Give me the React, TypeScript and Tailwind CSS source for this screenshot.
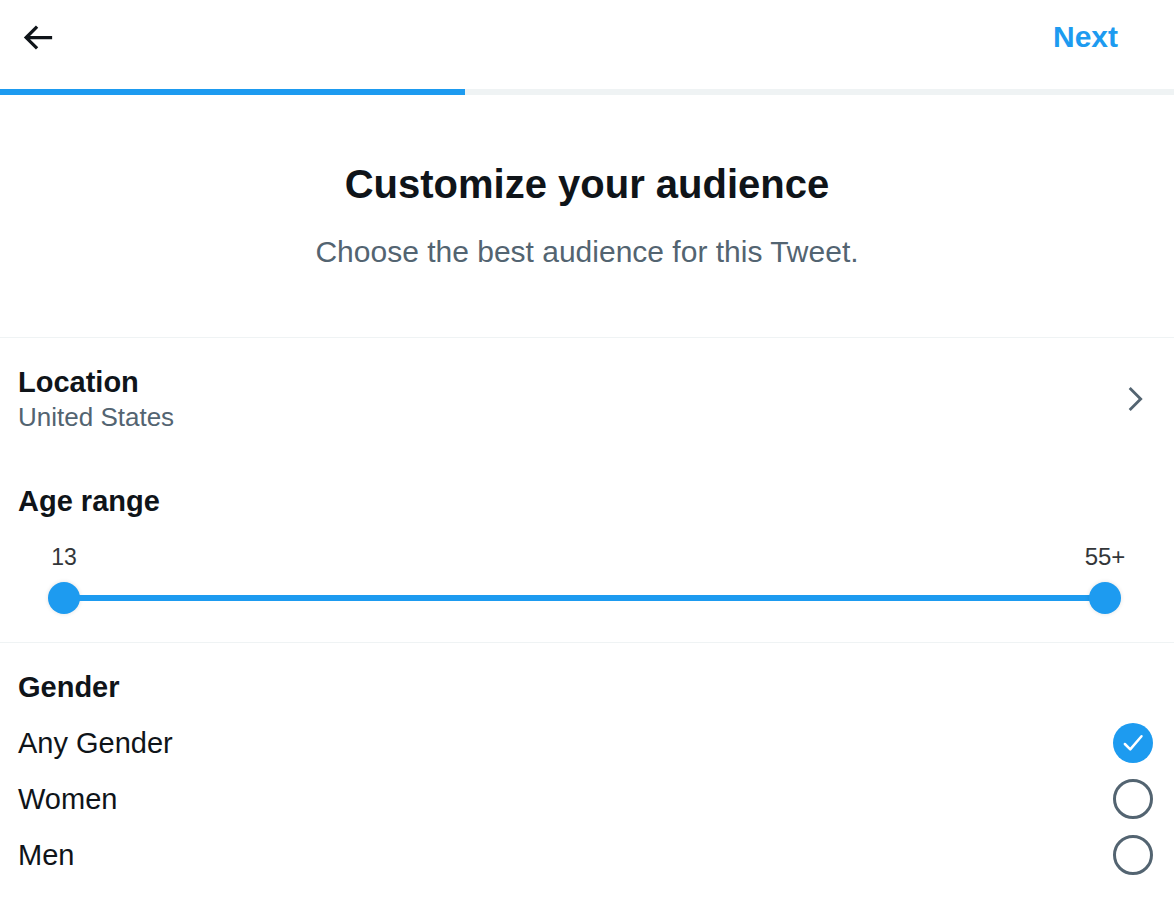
import React from "react";

const font = { fontFamily: '"Liberation Sans", Arial, sans-serif' };

function Check({ checked }: { checked: boolean }) {
  if (checked) {
    return (
      <div className="w-[40px] h-[40px] rounded-full bg-[#1d9bf0] flex items-center justify-center">
        <svg viewBox="0 0 24 24" className="w-[30px] h-[30px]" fill="none">
          <path d="M5.5 12.8l4.3 4.3L18.8 6.6" stroke="white" strokeWidth="2" strokeLinecap="round" strokeLinejoin="round" />
        </svg>
      </div>
    );
  }
  return <div className="w-[40px] h-[40px] rounded-full border-[3px] border-[#536471]" />;
}

export default function App() {
  const options = [
    { label: "Any Gender", checked: true },
    { label: "Women", checked: false },
    { label: "Men", checked: false },
  ];
  return (
    <div className="w-[1174px] h-[901px] bg-white text-[#0f1419] overflow-hidden" style={font}>
      {/* header */}
      <div className="h-[74px] flex items-center justify-between pl-[18px] pr-[56px]">
        <svg viewBox="0 0 24 24" className="w-[39px] h-[39px]" fill="#0f1419">
          <path d="M7.414 13l5.043 5.04-1.414 1.42L3.586 12l7.457-7.46 1.414 1.42L7.414 11H21v2H7.414z" />
        </svg>
        <span className="text-[30px] font-bold text-[#1d9bf0] leading-none">Next</span>
      </div>
      {/* progress */}
      <div className="mt-[15px] h-[6px] bg-[#eff3f4] flex">
        <div className="w-[465px] h-full bg-[#1d9bf0]" />
      </div>
      {/* title */}
      <div className="mt-[67px] flex flex-col items-center">
        <h1 className="text-[40px] leading-[44px] font-bold">Customize your audience</h1>
        <p className="mt-[28px] text-[30px] leading-[36px] text-[#536471]">Choose the best audience for this Tweet.</p>
      </div>
      <div className="mt-[67px] h-px bg-[#eff3f4]" />
      {/* location */}
      <div className="mt-[28px] flex items-center justify-between pl-[18px] pr-[22px]">
        <div className="flex flex-col">
          <span className="text-[29px] leading-[32px] font-bold">Location</span>
          <span className="mt-[4px] text-[26px] leading-[30px] text-[#536471]">United States</span>
        </div>
        <svg viewBox="0 0 24 24" className="w-[34px] h-[34px]" fill="#536471">
          <path d="M14.586 12L7.543 4.96l1.414-1.42L17.414 12l-8.457 8.46-1.414-1.42L14.586 12z" />
        </svg>
      </div>
      {/* age range */}
      <div className="mt-[53px] pl-[18px]">
        <span className="text-[29px] leading-[32px] font-bold">Age range</span>
      </div>
      <div className="mt-[25px] pl-[48px] pr-[53px] flex justify-between">
        <div className="w-[32px] flex justify-center text-[23px] leading-[28px] text-[#333639]">13</div>
        <div className="w-[32px] flex justify-center text-[24px] leading-[28px] text-[#333639] whitespace-nowrap">55+</div>
      </div>
      <div className="mt-[9px] h-[36px] pl-[48px] pr-[53px] flex items-center">
        <div className="flex-1 flex items-center">
          <div className="w-[32px] h-[32px] rounded-full bg-[#1d9bf0] shadow-[0_0_4px_rgba(0,0,0,0.12)] shrink-0" />
          <div className="flex-1 h-[6px] bg-[#1d9bf0] -mx-[2px]" />
          <div className="w-[32px] h-[32px] rounded-full bg-[#1d9bf0] shadow-[0_0_4px_rgba(0,0,0,0.12)] shrink-0" />
        </div>
      </div>
      <div className="mt-[26px] h-px bg-[#eff3f4]" />
      {/* gender */}
      <div className="mt-[28px] pl-[18px]">
        <span className="text-[29px] leading-[32px] font-bold">Gender</span>
      </div>
      <div className="mt-[11px] flex flex-col">
        {options.map((o) => (
          <div key={o.label} className="h-[56px] flex items-center justify-between pl-[18px] pr-[21px]">
            <span className="text-[29px] leading-[32px]">{o.label}</span>
            <Check checked={o.checked} />
          </div>
        ))}
      </div>
    </div>
  );
}
